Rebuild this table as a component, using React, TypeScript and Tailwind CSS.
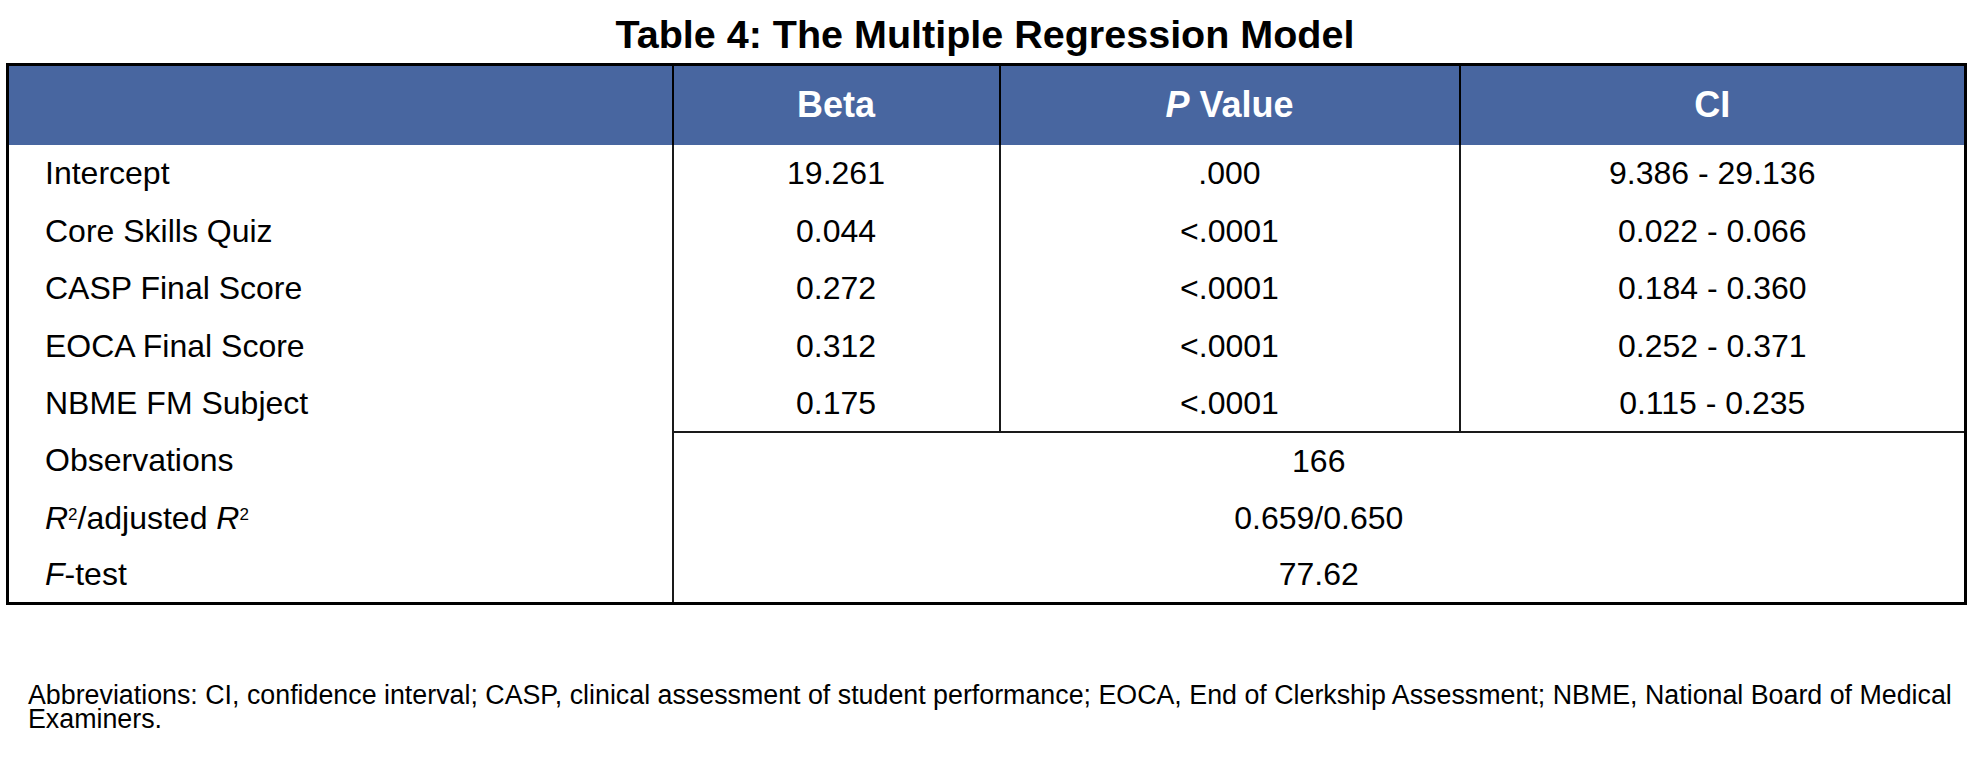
import type { ReactNode } from "react"

type Row = { label: ReactNode; beta: string; p: string; ci: string }

const rows: Row[] = [
  { label: "Intercept", beta: "19.261", p: ".000", ci: "9.386 - 29.136" },
  { label: "Core Skills Quiz", beta: "0.044", p: "<.0001", ci: "0.022 - 0.066" },
  { label: "CASP Final Score", beta: "0.272", p: "<.0001", ci: "0.184 - 0.360" },
  { label: "EOCA Final Score", beta: "0.312", p: "<.0001", ci: "0.252 - 0.371" },
  { label: "NBME FM Subject", beta: "0.175", p: "<.0001", ci: "0.115 - 0.235" },
]

const stats: { label: ReactNode; value: string }[] = [
  { label: "Observations", value: "166" },
  {
    label: (
      <>
        <i>R</i>
        <sup className="text-[17px]">2</sup>/adjusted <i>R</i>
        <sup className="text-[17px]">2</sup>
      </>
    ),
    value: "0.659/0.650",
  },
  {
    label: (
      <>
        <i>F</i>-test
      </>
    ),
    value: "77.62",
  },
]

function App() {
  return (
    <div className="w-[1970px] h-[760px] bg-white text-black font-['Liberation_Sans',Arial,sans-serif]">
      <h1 className="h-[63px] pt-[12px] text-center text-[39.5px] leading-[44px] font-bold">
        Table 4: The Multiple Regression Model
      </h1>
      <div className="pl-[6px]">
        <table className="table-fixed border-collapse border-[3px] border-black w-[1958px] text-[32px]">
          <colgroup>
            <col className="w-[665px]" />
            <col className="w-[327px]" />
            <col className="w-[460px]" />
            <col className="w-[506px]" />
          </colgroup>
          <thead>
            <tr className="h-[80px] bg-[#4866a0] text-white text-[36px]">
              <th className="border-r-2 border-black"></th>
              <th className="border-r-2 border-black text-center font-bold">Beta</th>
              <th className="border-r-2 border-black text-center font-bold">
                <i>P</i> Value
              </th>
              <th className="text-center font-bold">CI</th>
            </tr>
          </thead>
          <tbody>
            {rows.map((r, i) => (
              <tr key={i} className={i % 2 === 0 ? "h-[57px]" : "h-[58px]"}>
                <td className="pl-[36px] border-r-2 border-[#1a1a1a]">{r.label}</td>
                <td className="text-center border-r-2 border-[#1a1a1a]">{r.beta}</td>
                <td className="text-center border-r-2 border-[#1a1a1a]">{r.p}</td>
                <td className="text-center">{r.ci}</td>
              </tr>
            ))}
            {stats.map((s, i) => (
              <tr key={i} className={i === 1 ? "h-[58px]" : "h-[57px]"}>
                <td className="pl-[36px] border-r-2 border-[#1a1a1a]">{s.label}</td>
                <td
                  colSpan={3}
                  className={`text-center ${i === 0 ? "border-t-2 border-[#1a1a1a]" : ""}`}
                >
                  {s.value}
                </td>
              </tr>
            ))}
          </tbody>
        </table>
      </div>
      <p className="mt-[78px] pl-[28px] pr-[4px] text-[26.8px] leading-[24px]">
        Abbreviations: CI, confidence interval; CASP, clinical assessment of student performance; EOCA, End of
        Clerkship Assessment; NBME, National Board of Medical Examiners.
      </p>
    </div>
  )
}

export default App
